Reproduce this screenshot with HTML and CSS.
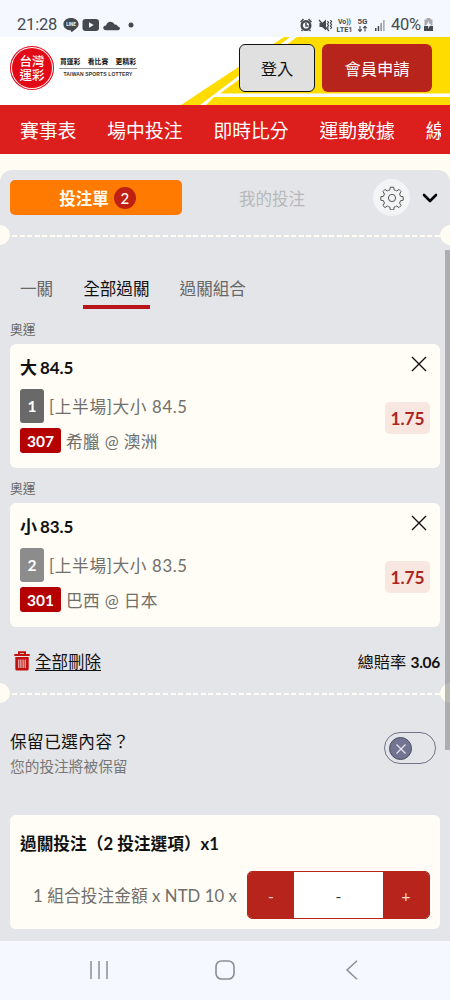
FILE: index.html
```html
<!DOCTYPE html>
<html lang="zh-Hant">
<head>
<meta charset="utf-8">
<title>台灣運彩 投注單</title>
<link rel="stylesheet" href="styles.css">
</head>
<body>
<div class="phone">
  <div class="status">
    <span class="clock">21:28</span>
    <svg class="st-left" width="74" height="18" viewBox="0 0 74 18">
      <g fill="#454a50">
        <path d="M8 2c4.400 0 7.600 2.700 7.600 6.200 0 3.100-3.800 5.800-7.300 8.100-.3-.9 0-1.500-.3-1.900C3.600 14.200.4 11.800.4 8.200.4 4.700 3.600 2 8 2z"/>
        <rect x="19.500" y="3" width="16.500" height="12" rx="3"/>
        <path d="M43.500 14.200c-4.500 0-4-4.600-.5-4.800 1-4.400 6.800-5.200 8.500-.8 2.800-.3 3 1.200 3.300 2 3 .4 2.700 3.600.2 3.600z"/>
        <circle cx="68" cy="9" r="2.500"/>
      </g>
      <path d="M26 6.200v5.600l4.700-2.800z" fill="#f5f9ff"/>
      <text class="line-mark" x="8" y="9.900" text-anchor="middle">LINE</text>
    </svg>
    <span class="grow"></span>
    <svg class="st-right" width="87" height="18" viewBox="0 0 87 18">
      <g fill="none" stroke="#454a50" stroke-width="1.500">
        <circle cx="6" cy="9.500" r="4.300" stroke-width="2.400"/>
        <path d="M0.500 6l3-3M11.500 6l-3-3M6 7v3h2.500M2.500 14l-1 1M9.500 14l1 1"/>
        <path d="M19 4l10 11M27.500 5l1 1.500-1 1.500 1 1.500-1 1.500 1 1.500M30.500 4l1 1.500-1 1.500 1 1.500-1 1.500 1 1.500-1 1.500" stroke-width="1.200"/>
      </g>
      <path d="M19.500 7h2.500l4-3.500v11l-4-3.500h-2.500z" fill="#454a50"/>
      <text class="st-tiny" x="38" y="8" textLength="13" lengthAdjust="spacingAndGlyphs">Vo))</text>
      <text class="st-tiny" x="36.500" y="16.300" textLength="16" lengthAdjust="spacingAndGlyphs">LTE1</text>
      <text class="st-tiny" x="57.500" y="8" textLength="10" lengthAdjust="spacingAndGlyphs">5G</text>
      <path d="M60 10v5M58.200 13.400l1.800 2 1.800-2M65 15.500v-5M63.200 12.200l1.800-2 1.800 2" fill="none" stroke="#454a50" stroke-width="1.100"/>
      <g fill="#454a50"><rect x="75" y="12" width="1.500" height="3"/><rect x="77.700" y="10" width="1.500" height="5"/><rect x="80.400" y="7" width="1.500" height="8" fill="#8a8e93"/><rect x="83.100" y="4" width="1.500" height="11" fill="#a5a8ac"/></g>
    </svg>
    <span class="percent">40%</span>
    <svg width="11" height="16" viewBox="0 0 11 16">
      <path d="M3.500 1h4v1.500h2v6h-8v-6h2z" fill="#a5a8ac"/><path d="M1 9h9v5H1z" fill="#454a50"/><path d="M6 3.500L3 9h2.300L5 12l3-5.200H5.800z" fill="#f5f9ff"/>
    </svg>
  </div>

  <header class="header">
    <svg class="header-art" width="450" height="68" viewBox="0 0 450 68">
      <path d="M181 68L240 29 284 0H450V68z" fill="#ffdc00"/>
      <path d="M200 68L290 0h7L220 56.500H450V60H214l-8 8z" fill="#fff"/>
    </svg>
    <div class="brand">
      <div class="seal"><span>台灣</span><span>運彩</span></div>
      <div class="motto">
        <div class="motto-zh"><span>買運彩</span><span>看比賽</span><span>更精彩</span></div>
        <div class="motto-en">TAIWAN SPORTS LOTTERY</div>
      </div>
    </div>
    <div class="auth">
      <button class="login">登入</button>
      <button class="join">會員申請</button>
    </div>
  </header>

  <nav class="nav"><span>賽事表</span><span>場中投注</span><span>即時比分</span><span>運動數據</span><span>線</span></nav>

  <main class="slip">
    <div class="slip-tabs">
      <div class="slip-tab on">投注單<span class="count">2</span></div>
      <div class="slip-tab off">我的投注</div>
      <div class="gear">
        <svg width="24" height="24" viewBox="0 0 24 24" fill="none" stroke="#555" stroke-width="1">
          <circle cx="12" cy="12" r="3.600"/>
          <path d="M10.300 1.200h3.400l.5 2.800q1.400.3 2.500 1l2.300-1.600 2.100 2.100-1.600 2.500q.7 1.100 1 2.300l2.700.5v3.400l-2.700.5q-.3 1.300-1 2.300l1.600 2.500-2.100 2.100-2.300-1.600q-1.100.7-2.500 1l-.5 2.800h-3.400l-.5-2.800q-1.400-.3-2.500-1l-2.300 1.600-2.100-2.100 1.600-2.500q-.7-1-1-2.300l-2.700-.5v-3.400l2.700-.5q.3-1.200 1-2.300L2.900 5.500 5 3.400 7.300 5q1.100-.7 2.500-1z" stroke-linejoin="round"/>
        </svg>
      </div>
      <svg class="chev" width="16" height="10" viewBox="0 0 16 10"><path d="M2 2l6 6L14 2" fill="none" stroke="#000" stroke-width="2.600" stroke-linecap="round" stroke-linejoin="round"/></svg>
    </div>
    <div class="tear"></div>
    <div class="modes"><span>一關</span><span class="active">全部過關</span><span>過關組合</span></div>

    <div class="league">奧運</div>
    <section class="card bet">
      <div class="bet-info">
        <div class="pick"><span>大</span><span class="num">84.5</span></div>
        <div class="line"><span class="idx">1</span><span class="desc">[上半場]大小 84.5</span></div>
        <div class="line match"><span class="code">307</span><span class="desc teams">希臘 @ 澳洲</span></div>
      </div>
      <div class="bet-side">
        <svg width="16" height="16" viewBox="0 0 16 16"><path d="M1 1l14 14M15 1L1 15" stroke="#111" stroke-width="1.400"/></svg>
        <span class="odds">1.75</span>
      </div>
    </section>

    <div class="league second">奧運</div>
    <section class="card bet">
      <div class="bet-info">
        <div class="pick"><span>小</span><span class="num">83.5</span></div>
        <div class="line"><span class="idx light">2</span><span class="desc">[上半場]大小 83.5</span></div>
        <div class="line match"><span class="code">301</span><span class="desc teams">巴西 @ 日本</span></div>
      </div>
      <div class="bet-side">
        <svg width="16" height="16" viewBox="0 0 16 16"><path d="M1 1l14 14M15 1L1 15" stroke="#111" stroke-width="1.400"/></svg>
        <span class="odds">1.75</span>
      </div>
    </section>

    <div class="summary">
      <div class="clear">
        <svg width="16" height="20" viewBox="0 0 16 20">
          <path d="M5 3V1.200h6V3M.3 4h15.400" fill="none" stroke="#c2100f" stroke-width="2"/>
          <path d="M1.300 6h13.400v12q0 1.500-1.500 1.500H2.800q-1.500 0-1.500-1.500z" fill="#c2100f"/>
          <path d="M4.800 8.500v8.500M6.900 8.500v8.500M9.100 8.500v8.500M11.200 8.500v8.500" stroke="#f3dede" stroke-width="1"/>
        </svg>
        <span>全部刪除</span>
      </div>
      <div class="total">總賠率 <b>3.06</b></div>
    </div>
    <div class="tear lower"></div>

    <div class="keep">
      <div><div class="keep-title">保留已選內容？</div><div class="keep-sub">您的投注將被保留</div></div>
      <div class="toggle"><span class="knob"><svg width="12" height="12" viewBox="0 0 12 12"><path d="M1.500 1.500l9 9M10.500 1.500l-9 9" stroke="#e8e8f2" stroke-width="1.200"/></svg></span></div>
    </div>

    <section class="card stake">
      <div class="stake-title">過關投注（2 投注選項）x1</div>
      <div class="stake-row">
        <span class="stake-label">1 組合投注金額 x NTD 10 x</span>
        <div class="stepper"><span class="btn">-</span><span class="val">-</span><span class="btn">+</span></div>
      </div>
    </section>
    <div class="scrollbar"></div>
  </main>

  <footer class="sysnav">
    <svg width="20" height="20" viewBox="0 0 20 20"><path d="M2 1v18M10 1v18M18 1v18" stroke="#8a8d91" stroke-width="1.500"/></svg>
    <svg width="20" height="20" viewBox="0 0 20 20"><rect x="1" y="1" width="18" height="18" rx="5.500" fill="none" stroke="#8a8d91" stroke-width="1.600"/></svg>
    <svg width="20" height="20" viewBox="0 0 20 20"><path d="M16 .8L6 10l10 9.200" fill="none" stroke="#8a8d91" stroke-width="1.500"/></svg>
  </footer>
</div>
</body>
</html>
```
FILE: styles.css
```css
* { box-sizing: border-box; }
body { margin: 0; font-family: Lato, "Noto Sans CJK TC", sans-serif; background: #fffdf3; }
svg { display: block; flex: none; }
.phone { width: 450px; height: 1000px; overflow: hidden; display: flex; flex-direction: column; }
.grow { flex: 1; }

.status { height: 37px; flex: none; background: #f5f9ff; display: flex; align-items: center; padding: 13px 16px 0 17px; color: #454a50; font: 16.500px/24px Roboto, sans-serif; }
.clock { width: 46px; letter-spacing: -.2px; }
.percent { margin: 0 2px 0 4px; letter-spacing: -.2px; }
.line-mark { font: bold 4.500px Roboto, sans-serif; fill: #f5f9ff; }
.st-tiny { font: bold 7.500px Roboto, sans-serif; fill: #454a50; }

.header { position: relative; height: 68px; flex: none; background: #fff; display: flex; justify-content: space-between; padding: 7px 18px 0 10px; }
.header-art { position: absolute; left: 0; top: 0; }
.brand { position: relative; display: flex; gap: 5px; padding-top: 2px; }
.seal { width: 44px; height: 44px; border-radius: 50%; background: #e30a18; box-shadow: inset 0 0 0 1px #e30a18, inset 0 0 0 2px #fff; color: #fff; font: 500 12.500px/14px "Noto Sans CJK TC", sans-serif; display: flex; flex-direction: column; align-items: center; justify-content: center; }
.seal span { display: block; height: 14px; }
.motto { width: 78px; padding-top: 9px; }
.motto-zh { display: flex; justify-content: space-between; padding: 0 1px; font: bold 6.800px/13px "Noto Sans CJK TC", sans-serif; border-bottom: 1px solid #999; color: #111; }
.motto-en { font: bold 5px/10px "Liberation Sans", sans-serif; letter-spacing: .15px; text-align: center; white-space: nowrap; color: #333; }
.auth { position: relative; display: flex; gap: 7px; }
.auth button { font: 16.300px/24px "Noto Sans CJK TC", sans-serif; height: 48px; border-radius: 6px; padding: 0; }
.login { width: 76px; background: #e0e0e0; border: 1px solid #111; color: #111; }
.join { width: 110px; background: #b7241b; border: 0; color: #fff; }

.nav { height: 49px; flex: none; background: #dc1e1c; color: #fff; font-size: 18.800px; line-height: 51px; display: flex; gap: 31px; padding-left: 20px; white-space: nowrap; overflow: hidden; }
.nav span { flex: none; }
.nav span:last-child { width: 15px; overflow: hidden; }

.slip { position: relative; margin-top: 16px; height: 771px; flex: none; background: #e4e5e8; border-radius: 12px 12px 0 0; padding: 10px 10px 0; }
.slip-tabs { display: flex; align-items: center; height: 35px; }
.slip-tab { height: 35px; display: flex; align-items: center; justify-content: center; font-size: 16.500px; }
.slip-tab.on { width: 172px; border-radius: 5px; background: #ff7a00; color: #fffdf3; font-weight: 700; gap: 5px; padding-left: 3px; }
.count { width: 22px; height: 22px; border-radius: 50%; background: #c02014; text-align: center; line-height: 22px; font-size: 15px; font-weight: 500; }
.slip-tab.off { width: 180px; color: #b6b8ba; }
.gear { width: 37px; height: 37px; border-radius: 50%; background: #f3f4f6; display: flex; align-items: center; justify-content: center; margin-left: 11px; }
.chev { margin: 1px 0 0 12px; }
.tear { height: 20px; margin: 10px -10px 0; background:
  radial-gradient(circle at 0 50%, #fffdf3 9.500px, transparent 10px),
  radial-gradient(circle at 100% 50%, #fffdf3 9.500px, transparent 10px),
  repeating-linear-gradient(90deg, #fffdf3 0 5px, transparent 5px 7.550px) 12px 10px / 430px 2px no-repeat; }
.modes { display: flex; gap: 30px; padding: 0 10px; height: 64px; align-items: flex-end; font-size: 16.600px; color: #666; line-height: 40px; }
.modes span { height: 40px; border-bottom: 4px solid transparent; }
.modes .active { color: #111; border-color: #b8151b; }

.league { font-size: 12.800px; line-height: 20px; height: 25px; margin-top: 10px; color: #666; }
.card { background: #fffdf5; border-radius: 6px; }
.bet { height: 124px; padding: 10px 3px 0 10px; display: flex; justify-content: space-between; }
.pick { display: flex; gap: 3px; font-size: 17px; font-weight: 700; line-height: 27px; color: #111; }
.num { letter-spacing: -.1px; }
.line { display: flex; align-items: center; margin-top: 8px; height: 34px; }
.line.match { margin-top: 5px; height: 25px; }
.idx, .code { color: #fff; font-weight: 700; font-size: 15.500px; border-radius: 3px; display: flex; align-items: center; justify-content: center; height: 100%; }
.idx { width: 24px; background: #696969; }
.idx.light { background: #8c8c8c; }
.code { width: 41px; background: #b50000; }
.desc { font-size: 16.700px; letter-spacing: .65px; color: #706f6b; margin-left: 5px; }
.desc.teams { letter-spacing: .35px; }
.bet-side { display: flex; flex-direction: column; align-items: flex-end; padding: 2px 7px 0 0; }
.bet-side svg { margin-right: 3px; }
.odds { margin-top: 30px; width: 45px; height: 32px; border-radius: 5px; background: #f8e6e0; color: #ad2420; font-size: 17.300px; font-weight: 700; letter-spacing: -.1px; display: flex; align-items: center; justify-content: center; }

.summary { height: 56px; display: flex; justify-content: space-between; align-items: center; padding-top: 11px; font-size: 16.500px; color: #111; }
.clear { display: flex; align-items: center; gap: 5px; padding-left: 4px; }
.clear span { text-decoration: underline; text-underline-offset: 2px; }
.total { font-size: 16.300px; }
.total b { font-size: 15.500px; letter-spacing: -.3px; }
.tear.lower { margin-top: 0; }
.keep { height: 112px; padding: 26px 4px 0 0; display: flex; justify-content: space-between; }
.keep-title { font-size: 16.600px; line-height: 27px; letter-spacing: .5px; color: #111; }
.keep-sub { font-size: 14.700px; line-height: 20px; color: #777; }
.toggle { width: 52px; height: 32px; margin-top: 3px; border: 1px solid #73738a; border-radius: 16px; padding: 4px; }
.knob { width: 23px; height: 23px; border-radius: 50%; background: #73748f; border: 1px solid #4c4d65; display: flex; align-items: center; justify-content: center; }
.stake { height: 114px; padding: 14px 10px 0; }
.stake-title { font-size: 16.700px; font-weight: 700; line-height: 30px; color: #111; }
.stake-row { display: flex; align-items: center; justify-content: flex-end; gap: 10px; margin-top: 12px; }
.stake-label { font-size: 16.700px; letter-spacing: .08px; color: #706f6b; white-space: nowrap; }
.stepper { width: 183px; height: 48px; display: flex; border: 1px solid #b7241b; border-radius: 5px; overflow: hidden; font-size: 16px; line-height: 47px; text-align: center; }
.btn { width: 46px; background: #b7241b; color: #f7d7d0; }
.val { flex: 1; background: #fff; color: #333; }
.scrollbar { position: absolute; right: 0; top: 80px; width: 5px; height: 500px; background: rgba(130, 130, 130, .55); }

.sysnav { flex: 1; background: #f5f9ff; display: flex; justify-content: space-between; padding: 19px 89px 0; }
```
